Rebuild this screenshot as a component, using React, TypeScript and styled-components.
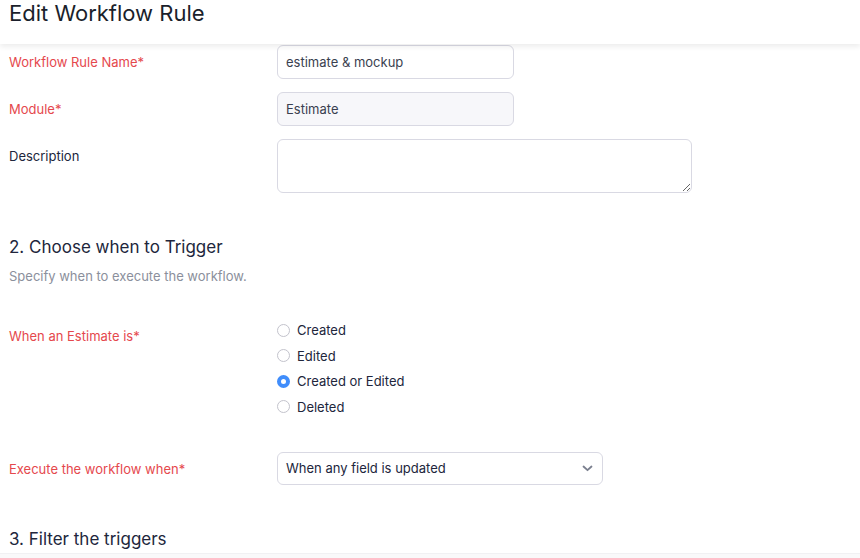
import React from "react";
import styled, { createGlobalStyle } from "styled-components";

const COLOR = {
  text: "#21263c",
  required: "#e5484d",
  muted: "#8b8f9c",
  border: "#d9d9e3",
  blue: "#408dfb",
};

const GlobalStyle = createGlobalStyle`
  html, body { margin: 0; padding: 0; background: #fff; }
  body {
    font-family: Inter, "Noto Sans", "Liberation Sans", sans-serif;
    color: ${COLOR.text};
    width: 860px;
    height: 558px;
    overflow: hidden;
  }
  * { box-sizing: border-box; }
`;

const Page = styled.div`
  display: flex;
  flex-direction: column;
  height: 558px;
`;

const Header = styled.header`
  position: relative;
  z-index: 2;
  height: 44px;
  padding: 0 9px;
  background: #fff;
  box-shadow: 0 3px 5px rgba(0, 0, 0, 0.07);
`;

const Title = styled.h1`
  margin: 0;
  font-size: 22px;
  line-height: 27px;
  font-weight: 400;
  color: #1b1f2b;
`;

const Body = styled.main`
  flex: 1;
  padding: 1px 9px 0;
  overflow: hidden;
`;

const Row = styled.div<{ $mt?: number }>`
  display: grid;
  grid-template-columns: 268px 1fr;
  align-items: start;
  margin-top: ${(p) => p.$mt ?? 0}px;
`;

const Label = styled.label<{ $required?: boolean }>`
  padding-top: 9px;
  font-size: 13px;
  line-height: 16px;
  color: ${(p) => (p.$required ? COLOR.required : COLOR.text)};
`;

const TextInput = styled.input<{ $readOnly?: boolean }>`
  width: 237px;
  height: 34px;
  padding: 0 8px;
  border: 1px solid ${COLOR.border};
  border-radius: 6px;
  font: inherit;
  font-size: 13px;
  color: #3a3f50;
  background: ${(p) => (p.$readOnly ? "#f7f7fa" : "#fff")};
  outline: none;
`;

const TextArea = styled.textarea`
  display: block;
  width: 415px;
  height: 54px;
  padding: 8px;
  border: 1px solid ${COLOR.border};
  border-radius: 6px;
  font: inherit;
  font-size: 13px;
  outline: none;
`;

const SectionTitle = styled.h2<{ $mt: number }>`
  margin: ${(p) => p.$mt}px 0 0;
  font-size: 17px;
  line-height: 24px;
  font-weight: 400;
  color: ${COLOR.text};
`;

const SectionHint = styled.p`
  margin: 9px 0 0;
  font-size: 13px;
  line-height: 16px;
  color: ${COLOR.muted};
`;

const RadioGroup = styled.div`
  display: flex;
  flex-direction: column;
  gap: 9.5px;
  padding-top: 3px;
`;

const RadioItem = styled.label`
  display: flex;
  align-items: center;
  gap: 7px;
  font-size: 13px;
  line-height: 16px;
  color: ${COLOR.text};
`;

const RadioDot = styled.span<{ $checked?: boolean }>`
  width: 13px;
  height: 13px;
  border-radius: 50%;
  flex: none;
  border: ${(p) => (p.$checked ? `4px solid ${COLOR.blue}` : "1px solid #c3c3cc")};
  background: #fff;
`;

const Select = styled.div`
  display: flex;
  align-items: center;
  justify-content: space-between;
  width: 326px;
  height: 33px;
  padding: 0 9px 0 8px;
  border: 1px solid ${COLOR.border};
  border-radius: 6px;
  font-size: 13px;
  color: ${COLOR.text};
  background: #fff;
`;

const Footer = styled.footer`
  height: 5px;
  background: #f9f9fa;
  border-top: 1px solid #f1f1f3;
`;

const triggers = ["Created", "Edited", "Created or Edited", "Deleted"];

export default function App() {
  const selected = "Created or Edited";
  return (
    <Page>
      <GlobalStyle />
      <Header>
        <Title>Edit Workflow Rule</Title>
      </Header>
      <Body>
        <Row>
          <Label $required>Workflow Rule Name*</Label>
          <TextInput defaultValue="estimate & mockup" />
        </Row>
        <Row $mt={13}>
          <Label $required>Module*</Label>
          <TextInput $readOnly readOnly defaultValue="Estimate" />
        </Row>
        <Row $mt={13}>
          <Label>Description</Label>
          <TextArea />
        </Row>

        <SectionTitle $mt={42}>2. Choose when to Trigger</SectionTitle>
        <SectionHint>Specify when to execute the workflow.</SectionHint>

        <Row $mt={35}>
          <Label $required>When an Estimate is*</Label>
          <RadioGroup>
            {triggers.map((t) => (
              <RadioItem key={t}>
                <RadioDot $checked={t === selected} />
                {t}
              </RadioItem>
            ))}
          </RadioGroup>
        </Row>

        <Row $mt={37}>
          <Label $required>Execute the workflow when*</Label>
          <Select>
            <span>When any field is updated</span>
            <svg width="11" height="7" viewBox="0 0 11 7" fill="none">
              <path d="M1.5 1.5 5.5 5.2 9.5 1.5" stroke="#7a7f8e" strokeWidth="1.8" strokeLinecap="round" strokeLinejoin="round" />
            </svg>
          </Select>
        </Row>

        <SectionTitle $mt={42}>3. Filter the triggers</SectionTitle>
      </Body>
      <Footer />
    </Page>
  );
}
